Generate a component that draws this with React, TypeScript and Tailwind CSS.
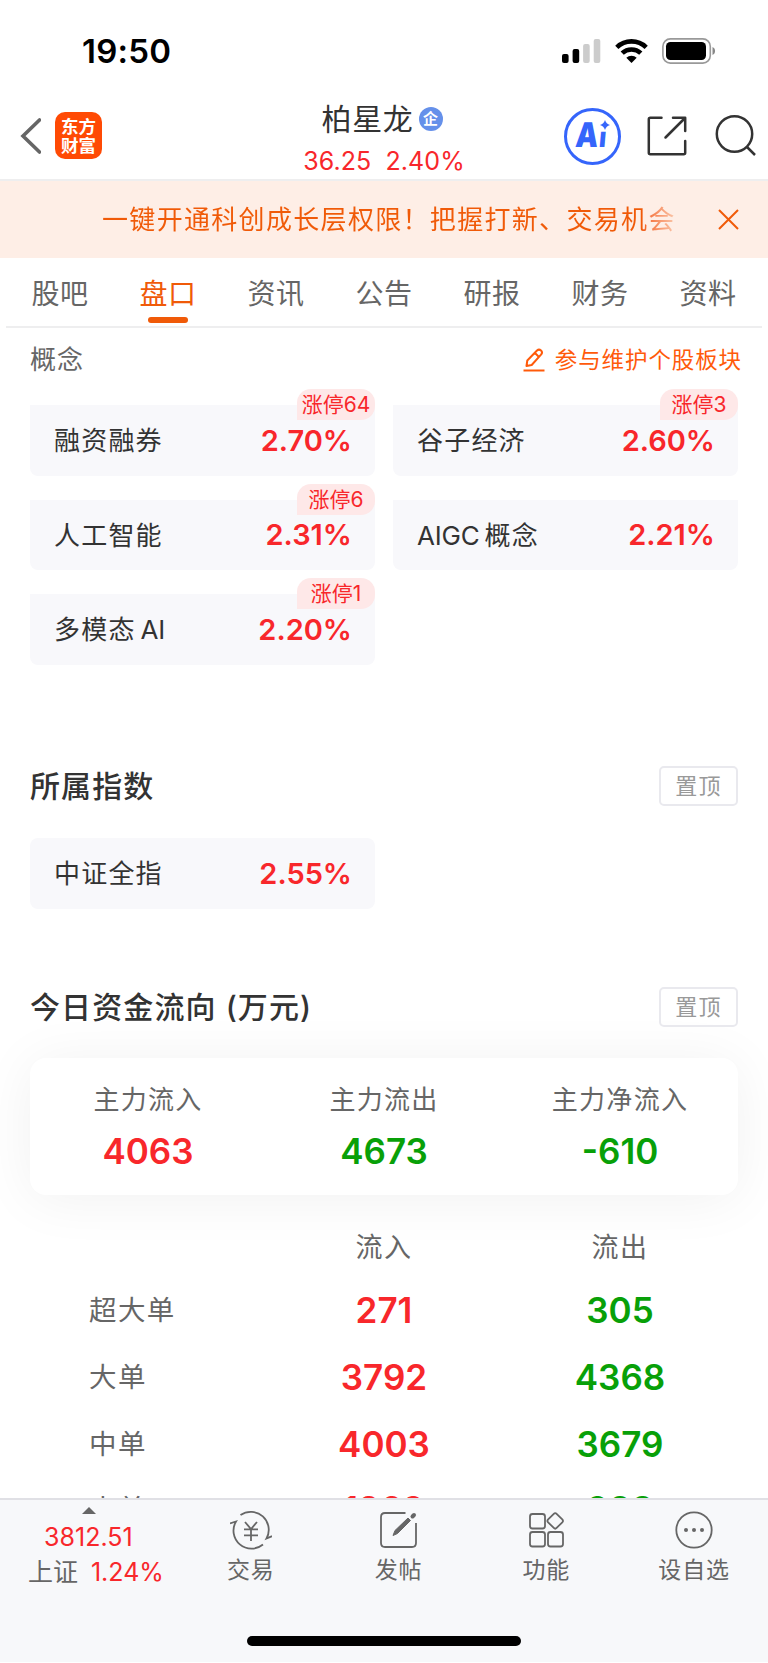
import { useState } from 'react';
import clsx from 'clsx';

interface Board {
  name: string;
  change: string;
  limitUp?: number;
}

const tabs = ['股吧', '盘口', '资讯', '公告', '研报', '财务', '资料'];

const boards: Board[] = [
  { name: '融资融券', change: '2.70%', limitUp: 64 },
  { name: '谷子经济', change: '2.60%', limitUp: 3 },
  { name: '人工智能', change: '2.31%', limitUp: 6 },
  { name: 'AIGC 概念', change: '2.21%' },
  { name: '多模态 AI', change: '2.20%', limitUp: 1 },
];

const mainFlow = [
  { label: '主力流入', value: '4063', up: true },
  { label: '主力流出', value: '4673', up: false },
  { label: '主力净流入', value: '-610', up: false },
];

const orders = [
  { label: '超大单', inflow: '271', outflow: '305' },
  { label: '大单', inflow: '3792', outflow: '4368' },
  { label: '中单', inflow: '4003', outflow: '3679' },
  { label: '小单', inflow: '1269', outflow: '983' },
];

function StatusBar() {
  return (
    <div className="flex h-[102px] shrink-0 items-center justify-between pl-[82px] pr-[52px]">
      <span className="text-[33px] font-semibold leading-none tracking-[0.2px] text-black">19:50</span>
      <div className="flex items-center">
        <svg className="h-6 w-[39px]" viewBox="0 0 39 24">
          <rect x="0" y="15" width="6.6" height="9" rx="2" fill="#000" />
          <rect x="10.6" y="10" width="6.6" height="14" rx="2" fill="#000" />
          <rect x="21.1" y="5" width="6.6" height="19" rx="2" fill="#ccc" />
          <rect x="31.7" y="0" width="6.6" height="24" rx="2" fill="#ccc" />
        </svg>
        <svg className="ml-[14px] h-6 w-[33px]" viewBox="0 0 33 24" fill="none" stroke="#000" strokeWidth="4.6">
          <path d="M1.8 8.3a21.2 21.2 0 0 1 29.4 0" />
          <path d="M7.2 14.2a13.4 13.4 0 0 1 18.6 0" />
          <path d="M16.5 24l-5.2-5.2a7.4 7.4 0 0 1 10.4 0z" fill="#000" stroke="none" />
        </svg>
        <svg className="ml-[14px] h-[26px] w-[54px]" viewBox="0 0 54 26">
          <rect x="0.9" y="0.9" width="47.4" height="24.2" rx="7.5" fill="none" stroke="#999" strokeWidth="1.6" />
          <rect x="4" y="4" width="40" height="18" rx="4.5" fill="#000" />
          <path d="M50.5 9c3.4 1.2 3.4 6.8 0 8z" fill="#888" />
        </svg>
      </div>
    </div>
  );
}

function Header() {
  return (
    <header className="grid h-[79px] shrink-0 grid-cols-[230px_308px_230px] border-b-2 border-[#eeeeef]">
      <div className="flex items-center pb-[10px] pl-[20px]">
        <svg className="h-9 w-[21px]" viewBox="0 0 21 36" fill="none" stroke="#666" strokeWidth="3.6">
          <path d="M19.5 2L3 18l16.5 16" strokeLinecap="round" />
        </svg>
        <div className="ml-[14px] flex h-[47px] w-[47px] flex-col items-center justify-center rounded-[10px] bg-[#ff4a04] text-[17.5px] font-bold leading-[19px] text-white">
          <span>东方</span>
          <span>财富</span>
        </div>
      </div>

      <div className="flex flex-col items-center">
        <div className="-mt-px flex h-[35px] items-center pr-1">
          <span className="text-[30px] leading-none tracking-[0.7px] text-[#333]">柏星龙</span>
          <span className="ml-[5px] flex h-6 w-6 items-center justify-center rounded-full bg-[#6590ea] text-[15px] font-bold leading-none text-white">
            企
          </span>
        </div>
        <div className="mt-[11px] flex gap-[14px] text-[25px] leading-[28px] tracking-[0.1px] text-[#f8272b]">
          <span>36.25</span>
          <span>2.40%</span>
        </div>
      </div>

      <div className="flex items-center pb-[9px] pl-[26px]">
        <div className="relative flex h-[57px] w-[57px] items-center justify-center rounded-full border-[3px] border-[#3565fb] text-[#3565fb]">
          <span className="-ml-[3px] -mt-[3px] flex scale-x-[0.84] -skew-x-6 items-baseline text-[34px] font-black leading-none">
            A<span className="ml-px text-[28px] leading-none">ı</span>
          </span>
          <svg className="absolute right-[8px] top-[9px] h-[10px] w-[10px]" viewBox="0 0 10 10" fill="currentColor">
            <path d="M5 0q1.200 3.800 5 5-3.800 1.200-5 5-1.200-3.800-5-5 3.800-1.200 5-5z" />
          </svg>
        </div>
        <svg className="ml-[26px] h-10 w-10" viewBox="0 0 40 40" fill="none" stroke="#333" strokeWidth="2.5" strokeLinecap="round" strokeLinejoin="round">
          <path d="M14.5 1.8H3.3q-1.5 0-1.5 1.5v33.4q0 1.5 1.5 1.5h33.4q1.5 0 1.5-1.5V25" />
          <path d="M26 1.8h12.2V15M38 2L18.5 21.5" />
        </svg>
        <svg className="ml-[28px] h-[42px] w-[42px]" viewBox="0 0 42 42" fill="none" stroke="#333" strokeWidth="2.5">
          <circle cx="19.5" cy="19" r="17.7" />
          <path d="M31.5 31.5l8.5 8.5" />
        </svg>
      </div>
    </header>
  );
}

function PromoBanner() {
  return (
    <div className="flex h-[77px] shrink-0 items-center justify-between bg-[#feeee6] pl-[102px] pr-[29px]">
      <span className="w-[574px] overflow-hidden whitespace-nowrap bg-gradient-to-r from-[#f05a08] from-[94%] to-[#f9c8ac] bg-clip-text text-[26px] leading-[36px] tracking-[1.32px] text-transparent">
        一键开通科创成长层权限！把握打新、交易机会
      </span>
      <svg className="h-[21px] w-[21px]" viewBox="0 0 21 21" stroke="#f05a08" strokeWidth="2">
        <path d="M1 1l19 19M20 1L1 20" />
      </svg>
    </div>
  );
}

function TabBar() {
  const [active, setActive] = useState('盘口');

  return (
    <nav className="mx-[6px] flex h-[70px] shrink-0 border-b-2 border-[#eeeeef]">
      {tabs.map((tab) => (
        <button
          key={tab}
          onClick={() => setActive(tab)}
          className={clsx(
            'flex flex-1 flex-col items-center pt-[18px] text-[28px] leading-[36px]',
            tab === active ? 'text-[#f05a08]' : 'text-[#666]',
          )}
        >
          <span className="tracking-[0.5px]">{tab}</span>
          {tab === active && <span className="mt-[5px] h-[6px] w-10 rounded-full bg-[#f05a08]" />}
        </button>
      ))}
    </nav>
  );
}

function BoardName({ name }: { name: string }) {
  return (
    <span className="flex items-center gap-[5px] pt-[2px] text-[26px] leading-none text-[#333]">
      {name.split(' ').map((part) => (
        <span key={part} className={/^[A-Z]+$/.test(part) ? 'tracking-[-0.2px]' : 'tracking-[1.2px]'}>
          {part}
        </span>
      ))}
    </span>
  );
}

function BoardCard({ board, className }: { board: Board; className?: string }) {
  return (
    <div className={clsx('relative flex h-[70.5px] items-center justify-between bg-[#f8f8fb] pl-6 pr-[23px]', className)}>
      <BoardName name={board.name} />
      <span className="text-[29px] font-semibold leading-none text-[#f8272b]">{board.change}</span>
      {board.limitUp && (
        <span className="absolute -top-4 right-0 flex h-[31px] w-[78px] items-center justify-center rounded-[14px] rounded-bl-none bg-[#fee8e8] text-[21px] leading-none text-[#f8272b]">
          涨停{board.limitUp}
        </span>
      )}
    </div>
  );
}

function SectionTitle({ title }: { title: string }) {
  return (
    <div className="flex h-10 items-center justify-between">
      <h2 className="text-[30px] font-medium leading-none tracking-[1.1px] text-[#333]">{title}</h2>
      <button className="h-10 w-[79px] rounded-[5px] border-2 border-[#e9e9ee] text-[22px] leading-none tracking-[1.2px] text-[#999]">
        置顶
      </button>
    </div>
  );
}

function CapitalFlow() {
  return (
    <section className="mt-[78px]">
      <SectionTitle title="今日资金流向 (万元)" />
      <div className="mt-[31px] grid h-[137px] grid-cols-3 rounded-[16px] bg-white pt-[24px] text-center shadow-[0_4px_56px_rgba(0,0,0,0.06)]">
        {mainFlow.map((item) => (
          <div key={item.label} className="flex flex-col items-center">
            <span className="text-[26px] leading-[36px] tracking-[1.3px] text-[#666]">{item.label}</span>
            <span
              className={clsx(
                'mt-[12px] text-[35px] font-semibold leading-[42px]',
                item.up ? 'text-[#f8272b]' : 'text-[#08a008]',
              )}
            >
              {item.value}
            </span>
          </div>
        ))}
      </div>

      <div className="mt-[30px] grid h-[46px] grid-cols-3 items-center text-center text-[27px] leading-none tracking-[1.4px] text-[#666]">
        <span className="col-start-2">流入</span>
        <span>流出</span>
      </div>
      <div className="mt-[6.5px]">
        {orders.map((order) => (
          <div key={order.label} className="grid h-[67px] grid-cols-3 items-center text-center last:-mt-[2px]">
            <span className="pl-[59px] text-left text-[27.5px] leading-none tracking-[1.4px] text-[#666]">{order.label}</span>
            <span className="text-[35px] font-semibold leading-none text-[#f8272b]">{order.inflow}</span>
            <span className="text-[35px] font-semibold leading-none text-[#08a008]">{order.outflow}</span>
          </div>
        ))}
      </div>
    </section>
  );
}

const actions = [
  {
    label: '交易',
    icon: (
      <>
        <path d="M10.5 5A18 18 0 0 1 36.5 28.5L42 26.2" />
        <path d="M33 34.5A18 18 0 0 1 6 11.5L0 13.4" />
        <path d="M15 12l6 7 6-7M14 19.3h14M14 25.3h14M21 19.3V31" />
      </>
    ),
  },
  {
    label: '发帖',
    icon: (
      <>
        <path d="M28.5 3H8q-4 0-4 4v26q0 4 4 4h27q4 0 4-4V13" />
        <path d="M16 25.5L18 20.5 31 8l2.5 2.5L20.5 23.5z" fill="#666" strokeWidth="1" />
        <path d="M35.5 6.5l1.5-1.5" strokeWidth="4" strokeLinecap="round" />
      </>
    ),
  },
  {
    label: '功能',
    icon: (
      <>
        <rect x="5" y="4" width="15" height="14.5" rx="2.5" />
        <rect x="5" y="22" width="15" height="14.5" rx="2.5" />
        <rect x="23" y="22" width="15" height="14.5" rx="2.5" />
        <rect x="24.2" y="4.9" width="12" height="12" rx="2" transform="rotate(45 30.2 10.9)" />
      </>
    ),
  },
  {
    label: '设自选',
    icon: (
      <>
        <circle cx="21" cy="20" r="17.7" />
        <g fill="#666" stroke="none">
          <circle cx="13" cy="20" r="2" />
          <circle cx="21" cy="20" r="2" />
          <circle cx="29" cy="20" r="2" />
        </g>
      </>
    ),
  },
];

function BottomBar() {
  return (
    <footer className="mb-px flex h-[164px] shrink-0 flex-col items-center border-t-2 border-[#e0e0e5] bg-[#f7f8fa]">
      <div className="flex w-full">
        <div className="flex w-[177px] flex-col items-center pl-[15px] pt-[7px]">
          <svg className="-ml-[14px] h-[7px] w-[14px]" viewBox="0 0 14 7">
            <path d="M0 7l7-7 7 7z" fill="#666" />
          </svg>
          <span className="-ml-[15px] mt-[5px] text-[25px] leading-[36px] text-[#f8272b]">3812.51</span>
          <div className="flex gap-[13px] whitespace-nowrap text-[25px] leading-[34px]">
            <span className="text-[#666]">上证</span>
            <span className="text-[#f8272b]">1.24%</span>
          </div>
        </div>
        {actions.map((action) => (
          <button key={action.label} className="flex w-[148px] flex-col items-center pt-[10px]">
            <svg className="h-10 w-[42px]" viewBox="0 0 42 40" fill="none" stroke="#666" strokeWidth="1.8">
              {action.icon}
            </svg>
            <span className="mt-[4px] text-[23px] leading-[32px] tracking-[0.8px] text-[#666]">{action.label}</span>
          </button>
        ))}
      </div>
      <div className="mb-[16px] mt-auto h-[10px] w-[274px] rounded-full bg-black" />
    </footer>
  );
}

export default function App() {
  return (
    <div className="flex h-[1663px] w-[768px] flex-col overflow-hidden bg-white font-['Inter','Noto_Sans_CJK_SC',sans-serif]">
      <StatusBar />
      <Header />
      <PromoBanner />
      <TabBar />

      <main className="min-h-0 flex-1 overflow-hidden px-[30px] pt-[13px]">
        <div className="flex h-[38px] items-center justify-between">
          <span className="text-[26px] leading-none tracking-[1px] text-[#666]">概念</span>
          <button className="-mr-[4px] flex items-center gap-[10px] text-[#ff5a0a]">
            <svg className="h-6 w-[22px]" viewBox="0 0 22 24" fill="none" stroke="currentColor" strokeWidth="2" strokeLinejoin="round">
              <path d="M3.5 18l.8-5.5L14 2.5q2-1.8 4 0t0 4.2L8.7 17zM12 5l4 4" />
              <path d="M.5 22.5h21" />
            </svg>
            <span className="text-[22.5px] leading-none tracking-[0.9px]">参与维护个股板块</span>
          </button>
        </div>

        <div className="mt-[26px] grid grid-cols-2 gap-x-[18px] gap-y-[24px]">
          {boards.map((board) => (
            <BoardCard key={board.name} board={board} className="rounded-b-[8px]" />
          ))}
        </div>

        <section className="mt-[101.5px]">
          <SectionTitle title="所属指数" />
          <div className="mt-[32px] grid grid-cols-2 gap-x-[18px]">
            <BoardCard board={{ name: '中证全指', change: '2.55%' }} className="rounded-[8px]" />
          </div>
        </section>

        <CapitalFlow />
      </main>

      <BottomBar />
    </div>
  );
}
